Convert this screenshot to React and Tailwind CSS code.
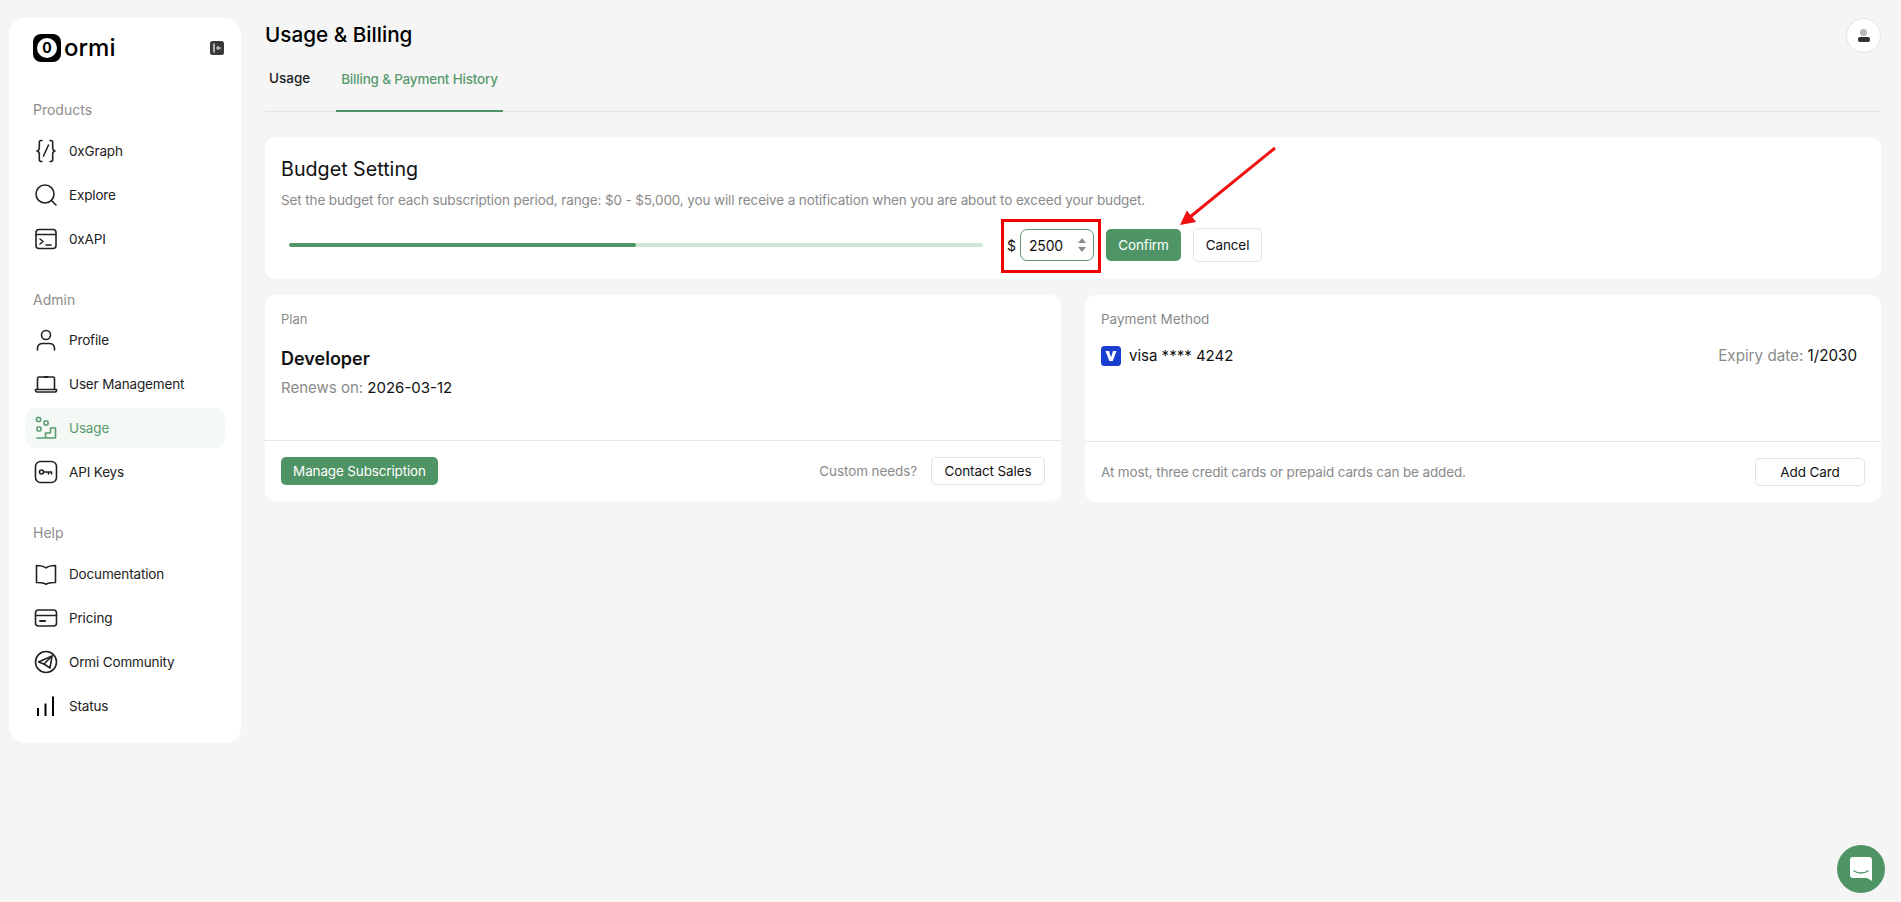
import React from 'react';

const Ico = ({ children, className = 'text-[#222]' }) => (
  <svg viewBox="0 0 24 24" fill="none" stroke="currentColor" strokeWidth="1.6" strokeLinecap="round" strokeLinejoin="round" className={`w-6 h-6 shrink-0 ${className}`}>
    {children}
  </svg>
);

const icons = {
  graph: (
    <Ico>
      <path d="M8 1.5H7C5.8 1.5 5.3 2.2 5.3 3.4V9c0 1.5-.6 2.5-2.3 3 1.7.5 2.3 1.5 2.3 3v5.6c0 1.2.5 1.9 1.7 1.9h1" />
      <path d="M16 1.5h1c1.2 0 1.7.7 1.7 1.9V9c0 1.5.6 2.5 2.3 3-1.7.5-2.3 1.5-2.3 3v5.6c0 1.2-.5 1.9-1.7 1.9h-1" />
      <path d="M14.5 6 9.5 17" />
    </Ico>
  ),
  search: (
    <Ico>
      <circle cx="11" cy="11" r="9" />
      <path d="m18 18 4 4" />
    </Ico>
  ),
  api: (
    <Ico>
      <rect x="2" y="2.5" width="20" height="19" rx="3" />
      <path d="M2 7.5h20" />
      <path d="m6 12 3 2.5-3 2.5" />
      <path d="M12 18h5" />
    </Ico>
  ),
  profile: (
    <Ico>
      <circle cx="12" cy="7" r="4.5" />
      <path d="M3.5 22v-1.5c0-3.5 2.5-5 5.5-5h6c3 0 5.5 1.5 5.5 5V22" />
    </Ico>
  ),
  laptop: (
    <Ico>
      <path d="M3.5 17V6.5c0-1 .6-1.5 1.5-1.5h14c.9 0 1.500.5 1.500 1.500V17" />
      <path d="M1.5 17.5h21v1c0 1-.6 1.5-1.5 1.5H3c-.9 0-1.5-.5-1.5-1.5z" />
      <path d="M10.5 5h3" strokeWidth="2" />
    </Ico>
  ),
  usage: (
    <Ico className="text-[#5a9a6f]">
      <rect x="2.5" y="1.5" width="4" height="4" rx="1" />
      <rect x="10" y="5" width="4" height="4" rx="1" />
      <rect x="3" y="11" width="4" height="4" rx="1" />
      <path d="M3 22h18.5V12h-5v5h-5v5" />
    </Ico>
  ),
  keys: (
    <Ico>
      <rect x="1.5" y="1.5" width="21" height="21" rx="5" />
      <circle cx="7.5" cy="12" r="2" />
      <path d="M9.5 12h8v2M14.5 12v2" />
    </Ico>
  ),
  book: (
    <Ico>
      <path d="M2.5 3.5c3.5 0 7 .5 9.5 2.5 2.5-2 6-2.5 9.5-2.5v17c-3 0-5.5 0-8 1l-1.5.8-1.5-.8c-2.5-1-5-1-8-1z" />
    </Ico>
  ),
  card: (
    <Ico>
      <rect x="1.5" y="4" width="21" height="16" rx="3" />
      <path d="M1.5 9.5h21" />
      <path d="M6 15h5" strokeWidth="2" />
    </Ico>
  ),
  telegram: (
    <Ico>
      <circle cx="12" cy="12" r="10.5" />
      <path d="M18 6 4.5 12l5.5 2 6 4z" />
      <path d="m18 6-8 8" />
    </Ico>
  ),
  status: (
    <Ico className="text-black">
      <path d="M4 22v-8M11.5 22V9.5M19 22V2.5" strokeWidth="2" strokeLinecap="butt" />
    </Ico>
  ),
};

const sections = [
  {
    title: 'Products',
    top: 'mt-[38px]',
    gap: 'mb-[11px]',
    items: [
      ['0xGraph', 'graph'],
      ['Explore', 'search'],
      ['0xAPI', 'api'],
    ],
  },
  {
    title: 'Admin',
    top: 'mt-[31px]',
    gap: 'mb-[10px]',
    items: [
      ['Profile', 'profile'],
      ['User Management', 'laptop'],
      ['Usage', 'usage', true],
      ['API Keys', 'keys'],
    ],
  },
  {
    title: 'Help',
    top: 'mt-[31px]',
    gap: 'mb-[11px]',
    items: [
      ['Documentation', 'book'],
      ['Pricing', 'card'],
      ['Ormi Community', 'telegram'],
      ['Status', 'status'],
    ],
  },
];

const Sidebar = () => (
  <aside className="w-[232px] h-[725px] shrink-0 bg-white rounded-[16px] px-[16px] pt-[16px]">
    <div className="flex items-center justify-between pl-[8px] pr-[1px]">
      <div className="flex items-center gap-[3px]">
        <div className="w-[28px] h-[28px] rounded-[8px] bg-black flex items-center justify-center">
          <div className="w-[20px] h-[20px] rounded-full bg-white flex items-center justify-center text-[14px] leading-none font-bold text-black">0</div>
        </div>
        <span className="text-[24px] leading-none font-medium text-black">ormi</span>
      </div>
      <svg viewBox="0 0 14 14" className="w-[14px] h-[14px]">
        <rect width="14" height="14" rx="2.5" fill="#3a3a3a" />
        <path d="M4 2.5v9" stroke="#fff" strokeWidth="1.2" />
        <path d="M11 7H7M8.5 5 6.7 7l1.8 2" stroke="#fff" strokeWidth="1" fill="none" />
      </svg>
    </div>
    {sections.map((s) => (
      <div key={s.title} className={s.top}>
        <div className={`pl-[8px] text-[14px] leading-[20px] text-[#8f8c8c] ${s.gap}`}>{s.title}</div>
        <div className="flex flex-col gap-[4px]">
          {s.items.map(([label, icon, active]) => (
            <div
              key={label}
              className={`flex items-center gap-[11px] h-[40px] pl-[9px] rounded-[10px] text-[13.5px] tracking-[-0.15px] ${active ? 'bg-[#f4f9f5] text-[#5a9a6f]' : 'text-[#222]'}`}
            >
              {icons[icon]}
              <span>{label}</span>
            </div>
          ))}
        </div>
      </div>
    ))}
  </aside>
);

const OutlineBtn = ({ children, className = '' }) => (
  <button className={`border border-[#e3e3e3] rounded-[5px] bg-white text-[13.5px] tracking-[-0.1px] text-[#111] flex items-center justify-center ${className}`}>
    {children}
  </button>
);

const BudgetCard = () => (
  <section className="mt-[25px] h-[142px] bg-white rounded-[10px] px-[16px] pt-[18px]">
    <h2 className="text-[19.7px] leading-[28px] text-[#111]">Budget Setting</h2>
    <p className="mt-[7px] text-[13.5px] leading-[20px] tracking-[-0.12px] text-[#8a8a8a]">
      Set the budget for each subscription period, range: $0 - $5,000, you will receive a notification when you are about to exceed your budget.
    </p>
    <div className="mt-[18px] flex items-center">
      <div className="ml-[8px] w-[694px] h-[4px] rounded-full bg-[#cfe6d6]">
        <div className="w-1/2 h-full rounded-full bg-[#4f9464]" />
      </div>
      <span className="ml-[24px] text-[14px] text-[#111]">$</span>
      <div className="ml-[4px] w-[74px] h-[32px] border border-[#5a9a6f] rounded-[7px] flex items-center justify-between pl-[8px] pr-[7px] text-[14px] tracking-[-0.2px] text-[#111]">
        <span>2500</span>
        <svg viewBox="0 0 8 14" className="w-[8px] h-[14px]" fill="#8a8a8a">
          <path d="M4 0 8 5H0zM4 14 0 9h8z" />
        </svg>
      </div>
      <button className="ml-[12px] w-[75px] h-[32px] rounded-[5px] bg-[#4f9464] text-white text-[13.5px] tracking-[-0.1px]">Confirm</button>
      <OutlineBtn className="ml-[12px] w-[69px] h-[34px]">Cancel</OutlineBtn>
    </div>
  </section>
);

const PlanCard = () => (
  <section className="flex-1 h-[206px] bg-white rounded-[10px] flex flex-col">
    <div className="h-[146px] px-[16px] pt-[14px] border-b border-[#e6e6e6]">
      <div className="text-[13px] leading-[20px] text-[#8a8a8a]">Plan</div>
      <div className="mt-[17px] text-[18px] leading-[26px] font-semibold text-[#111]">Developer</div>
      <div className="mt-[5px] text-[15px] leading-[22px] text-[#8a8a8a]">
        Renews on: <span className="text-[#111]">2026-03-12</span>
      </div>
    </div>
    <div className="flex-1 px-[16px] flex items-center justify-between">
      <button className="w-[157px] h-[28px] rounded-[5px] bg-[#4f9464] text-white text-[13.5px] tracking-[-0.15px]">Manage Subscription</button>
      <div className="flex items-center gap-[14px]">
        <span className="text-[13.5px] tracking-[-0.1px] text-[#8a8a8a]">Custom needs?</span>
        <OutlineBtn className="w-[114px] h-[28px]">Contact Sales</OutlineBtn>
      </div>
    </div>
  </section>
);

const PaymentCard = () => (
  <section className="flex-1 h-[207px] bg-white rounded-[10px] flex flex-col">
    <div className="h-[147px] px-[16px] pt-[14px] border-b border-[#e6e6e6]">
      <div className="text-[13.5px] leading-[20px] text-[#8a8a8a]">Payment Method</div>
      <div className="mt-[16px] flex items-center justify-between pr-[8px]">
        <div className="flex items-center gap-[8px] text-[15px] text-[#111]">
          <svg viewBox="0 0 20 20" className="w-[20px] h-[20px]">
            <rect width="20" height="20" rx="3.5" fill="#1a3fd0" />
            <path d="M4.5 5h3.6l1.9 6.5L12 5h3.5l-3.7 10H8.300z" fill="#fff" />
          </svg>
          <span>visa **** 4242</span>
        </div>
        <div className="text-[15.2px] text-[#8a8a8a]">
          Expiry date: <span className="text-[#111]">1/2030</span>
        </div>
      </div>
    </div>
    <div className="flex-1 px-[16px] flex items-center justify-between">
      <span className="text-[13.5px] tracking-[-0.14px] text-[#8a8a8a]">At most, three credit cards or prepaid cards can be added.</span>
      <OutlineBtn className="w-[110px] h-[28px]">Add Card</OutlineBtn>
    </div>
  </section>
);

export default function App() {
  return (
    <div className="relative h-[902px] overflow-hidden bg-[#f5f5f5] flex items-start pl-[9px] pr-[20px] pt-[18px] font-['Inter',sans-serif]">
      <Sidebar />
      <main className="flex-1 ml-[24px]">
        <div className="flex items-center justify-between h-[34px]">
          <h1 className="text-[20.7px] font-medium text-black">Usage &amp; Billing</h1>
          <div className="w-[35px] h-[35px] rounded-full bg-white border border-[#e4e4e4] flex flex-col items-center justify-center">
            <span className="w-[7px] h-[7px] rounded-full bg-[#b8b8b8]" />
            <span className="mt-[1px] w-[12px] h-[5px] rounded-[2px] bg-[#333]" />
          </div>
        </div>
        <div className="h-[60px] flex items-end border-b border-[#e3e3e3]">
          <div className="w-[71px] pl-[4px] pb-[23px] text-[13.5px] leading-[20px] font-medium text-[#222]">Usage</div>
          <div className="w-[167px] text-center pb-[21px] border-b-2 border-[#4f9464] -mb-px text-[13.5px] leading-[20px] tracking-[-0.2px] whitespace-nowrap font-medium text-[#5a9a6f]">Billing &amp; Payment History</div>
        </div>
        <BudgetCard />
        <div className="mt-[16px] flex gap-[24px] items-start">
          <PlanCard />
          <PaymentCard />
        </div>
      </main>

      {/* annotation over the screenshot */}
      <div className="absolute left-[1001px] top-[219px] w-[100px] h-[54px] border-[3px] border-[#f00000]" />
      <svg className="absolute left-[1170px] top-[140px] w-[115px] h-[100px]" viewBox="0 0 115 100">
        <path d="M105 8 20 77" stroke="#f01010" strokeWidth="3" />
        <path d="M10 85 16.800 70.500 26.200 82z" fill="#f01010" />
      </svg>

      <div className="absolute left-[1837px] top-[845px] w-[48px] h-[48px] rounded-full bg-[#4f9464] flex items-center justify-center">
        <svg viewBox="0 0 22 24" className="w-[22px] h-[24px]">
          <path d="M3 0h16a3 3 0 0 1 3 3v21l-5-3H3a3 3 0 0 1-3-3V3a3 3 0 0 1 3-3z" fill="#fff" />
          <path d="M4 14c4 2.6 10 2.6 14 0" stroke="#4f9464" strokeWidth="1.4" fill="none" strokeLinecap="round" />
        </svg>
      </div>
    </div>
  );
}
